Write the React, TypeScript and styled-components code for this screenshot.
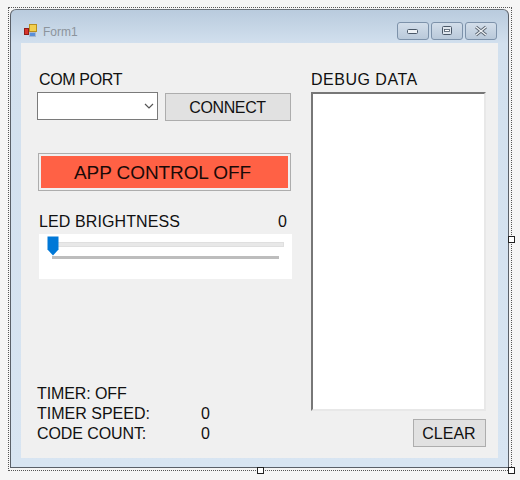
import React from "react";
import styled, { createGlobalStyle } from "styled-components";

const Global = createGlobalStyle`
  html, body { margin: 0; padding: 0; background: #f5f5f5; }
  body { width: 520px; height: 480px; overflow: hidden; font-family: "Liberation Sans", Arial, sans-serif; color: #111; }
  * { box-sizing: border-box; }
`;

const Selection = styled.div`
  position: relative;
  margin: 7px 0 0 8px;
  width: 504px;
  height: 464px;
  border: 1px dotted #555;
  padding: 1px 0 0 1px;
`;
const Handle = styled.span<{ $x: string; $y: string }>`
  position: absolute;
  left: ${(p) => p.$x};
  top: ${(p) => p.$y};
  width: 7px;
  height: 7px;
  background: #fff;
  border: 1px solid #222;
`;
const Window = styled.div`
  width: 499px;
  height: 459px;
  border: 1px solid #5a6068;
  border-top-color: #6b7178;
  border-radius: 6px 6px 0 0;
  background: linear-gradient(180deg, #b9cbdd 0, #d2e0ee 34px, #d8e5f2 100%);
  display: flex;
  flex-direction: column;
  padding: 0 10px 9px 10px;
`;
const TitleBar = styled.div`
  height: 33px;
  flex: none;
  display: flex;
  align-items: center;
  gap: 4px;
  padding: 9px 0 0 2px;
`;
const TitleText = styled.span`
  font-size: 12px;
  color: #8c949c;
  flex: 1;
  padding-top: 2px;
`;
const Controls = styled.div`
  display: flex;
  gap: 2px;
  margin-right: 1px;
`;
const CtlBtn = styled.div`
  width: 32px;
  height: 18px;
  border: 1px solid #7d92aa;
  border-radius: 3px;
  background: linear-gradient(180deg, #d3deea, #b9c9da);
  display: flex;
  align-items: center;
  justify-content: center;
`;
const Client = styled.div`
  flex: 1;
  background: #f0f0f0;
  display: grid;
  grid-template-columns: 274px 175px;
  padding: 26px 0 11px 16px;
`;
const LeftCol = styled.div`
  display: flex;
  flex-direction: column;
`;
const RightCol = styled.div`
  display: flex;
  flex-direction: column;
  align-items: flex-end;
`;
const Label = styled.div<{ $track?: number }>`
  font-size: 16px;
  line-height: 20px;
  height: 20px;
  white-space: nowrap;
  letter-spacing: ${(p) => p.$track ?? 0}px;
`;
const PortLabel = styled(Label)`
  margin: 1px 0 2px 2px;
`;
const PortRow = styled.div`
  display: flex;
  gap: 7px;
  align-items: flex-start;
`;
const Combo = styled.div`
  width: 121px;
  height: 28px;
  background: #fff;
  border: 1px solid #7a7a7a;
  display: flex;
  align-items: center;
  justify-content: flex-end;
  padding-right: 1px;
  color: #555;
`;
const GreyButton = styled.div<{ $w: number; $track?: number }>`
  width: ${(p) => p.$w}px;
  height: 28px;
  margin-top: 1px;
  padding: 2px 1px 0 0;
  background: #e1e1e1;
  border: 1px solid #adadad;
  display: flex;
  align-items: center;
  justify-content: center;
  font-size: 16px;
  letter-spacing: ${(p) => p.$track ?? 0}px;
`;
const AppControl = styled.div`
  margin: 32px 0 0 1px;
  width: 253px;
  height: 38px;
  border: 1px solid #adadad;
  padding: 2px;
  background: #f0f0f0;
`;
const AppControlFace = styled.div`
  height: 100%;
  background: #ff6145;
  display: flex;
  align-items: center;
  justify-content: center;
  font-size: 19px;
  letter-spacing: -0.1px;
  padding: 1px 4px 0 0;
  color: #1a0a08;
`;
const LedRow = styled(Label)`
  display: flex;
  justify-content: space-between;
  margin: 21px 0 0 2px;
  width: 248px;
`;
const SliderPanel = styled.div`
  margin: 2px 0 0 2px;
  width: 253px;
  height: 45px;
  background: #fff;
  position: relative;
  padding: 8px 8px 0 13px;
`;
const Track = styled.div`
  height: 5px;
  background: #e8e8e8;
  border: 1px solid #dfdfdf;
`;
const TickLine = styled.div`
  margin: 9px 5px 0 0;
  height: 3px;
  background: #bdbdbd;
`;
const Thumb = styled.svg`
  position: absolute;
  left: 8px;
  top: 2px;
`;
const Stats = styled.div`
  margin: auto 0 3px;
  display: grid;
  grid-template-columns: 164px auto;
  justify-content: start;
`;
const Debug = styled.div`
  width: 100%;
`;
const DebugLabel = styled(Label)`
  margin-top: 1px;
`;
const DebugBox = styled.div`
  width: 175px;
  height: 319px;
  margin-top: 2px;
  background: #fff;
  border: 2px solid;
  border-color: #777 #e8e8e8 #e8e8e8 #777;
`;
const ClearRow = styled.div`
  margin-top: 7px;
`;

export default function App() {
  return (
    <>
      <Global />
      <Selection>
        <Handle $x="499px" $y="228px" />
        <Handle $x="248px" $y="459px" />
        <Handle $x="499px" $y="459px" />
        <Window>
          <TitleBar>
            <svg width="16" height="16" viewBox="0 0 16 16">
              <rect x="6.5" y="1.5" width="7" height="7" fill="#f2cf4e" stroke="#b98f1e" />
              <rect x="1.5" y="5.5" width="4" height="6" fill="#d8342c" stroke="#8e1d18" />
              <rect x="6.5" y="9.5" width="6" height="4" fill="#5a8fd8" stroke="#a8b8d0" />
            </svg>
            <TitleText>Form1</TitleText>
            <Controls>
              <CtlBtn>
                <svg width="14" height="8" viewBox="0 0 14 8">
                  <rect x="1.5" y="2.5" width="10" height="4" rx="1" fill="#eef2f6" stroke="#4a5868" />
                </svg>
              </CtlBtn>
              <CtlBtn>
                <svg width="12" height="10" viewBox="0 0 12 10">
                  <rect x="1.5" y="0.5" width="9" height="8" rx="1" fill="#dfe6ee" stroke="#4a5868" />
                  <rect x="3.5" y="3.5" width="5" height="2" fill="#fff" stroke="#4a5868" strokeWidth="0.8" />
                </svg>
              </CtlBtn>
              <CtlBtn>
                <svg width="14" height="12" viewBox="0 0 14 12">
                  <path d="M2 2l10 8M12 2L2 10" stroke="#56606c" strokeWidth="3" />
                  <path d="M2 2l10 8M12 2L2 10" stroke="#eef2f6" strokeWidth="1.4" />
                </svg>
              </CtlBtn>
            </Controls>
          </TitleBar>
          <Client>
            <LeftCol>
              <PortLabel $track={-0.35}>COM PORT</PortLabel>
              <PortRow>
                <Combo>
                  <svg width="14" height="14" viewBox="0 0 14 14">
                    <path d="M3 5l4 4 4-4" fill="none" stroke="#555" strokeWidth="1.2" />
                  </svg>
                </Combo>
                <GreyButton $w={126} $track={-0.4}>CONNECT</GreyButton>
              </PortRow>
              <AppControl>
                <AppControlFace>APP CONTROL OFF</AppControlFace>
              </AppControl>
              <LedRow $track={0.1}>
                <span>LED BRIGHTNESS</span>
                <span>0</span>
              </LedRow>
              <SliderPanel>
                <Track />
                <TickLine />
                <Thumb width="12" height="20" viewBox="0 0 12 20">
                  <path d="M0.5 0.5h11v13L6 19.5 0.5 13.5z" fill="#0078d7" />
                </Thumb>
              </SliderPanel>
              <Stats>
                <Label $track={-0.1}>TIMER: OFF</Label>
                <span />
                <Label>TIMER SPEED:</Label>
                <Label>0</Label>
                <Label $track={-0.1}>CODE COUNT:</Label>
                <Label>0</Label>
              </Stats>
            </LeftCol>
            <RightCol>
              <Debug>
                <DebugLabel $track={0.5}>DEBUG DATA</DebugLabel>
                <DebugBox />
              </Debug>
              <ClearRow>
                <GreyButton $w={73}>CLEAR</GreyButton>
              </ClearRow>
            </RightCol>
          </Client>
        </Window>
      </Selection>
    </>
  );
}
